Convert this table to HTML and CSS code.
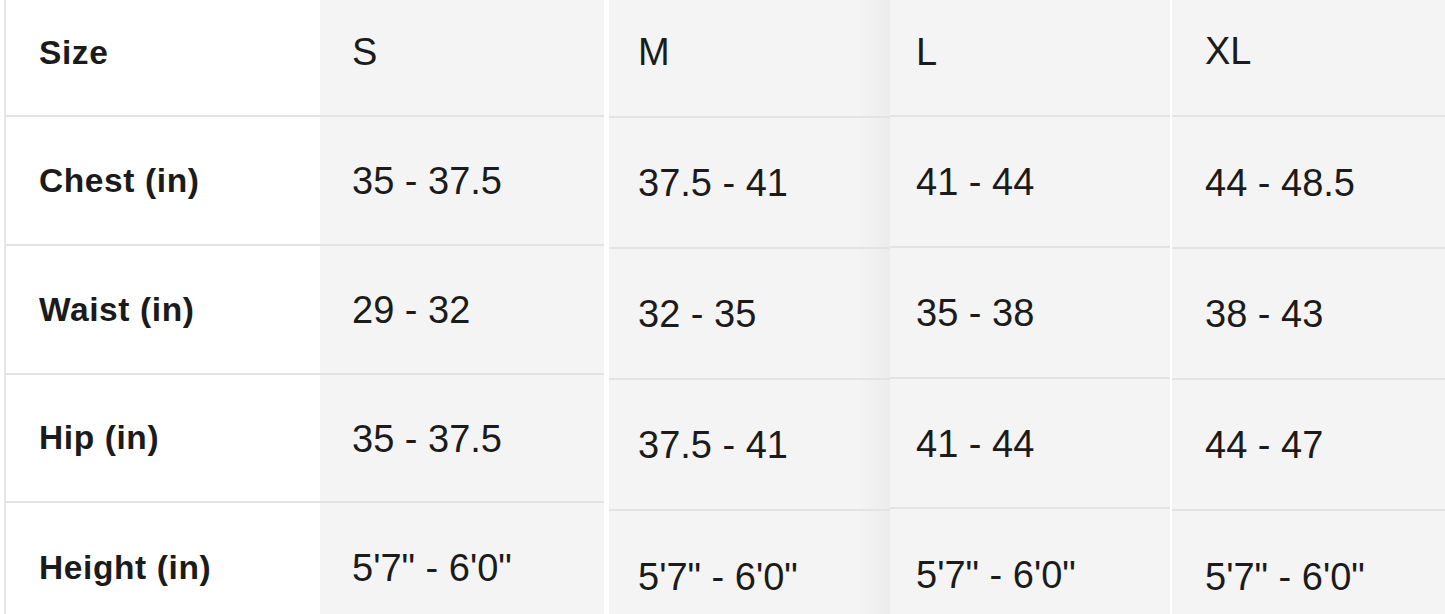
FILE: index.html
```html
<!DOCTYPE html>
<html lang="en">
<head>
<meta charset="utf-8">
<title>Size chart</title>
<link rel="stylesheet" href="styles.css">
</head>
<body>
<div class="chart">
  <div class="col col-label">
    <div class="cell head">Size</div>
    <div class="cell">Chest (in)</div>
    <div class="cell">Waist (in)</div>
    <div class="cell">Hip (in)</div>
    <div class="cell last">Height (in)</div>
  </div>
  <div class="col col-s">
    <div class="cell head">S</div>
    <div class="cell">35 - 37.5</div>
    <div class="cell">29 - 32</div>
    <div class="cell">35 - 37.5</div>
    <div class="cell last">5'7" - 6'0"</div>
  </div>
  <div class="col col-m">
    <div class="cell head">M</div>
    <div class="cell">37.5 - 41</div>
    <div class="cell">32 - 35</div>
    <div class="cell">37.5 - 41</div>
    <div class="cell last">5'7" - 6'0"</div>
  </div>
  <div class="col col-l">
    <div class="cell head">L</div>
    <div class="cell">41 - 44</div>
    <div class="cell">35 - 38</div>
    <div class="cell">41 - 44</div>
    <div class="cell last">5'7" - 6'0"</div>
  </div>
  <div class="col col-xl">
    <div class="cell head">XL</div>
    <div class="cell">44 - 48.5</div>
    <div class="cell">38 - 43</div>
    <div class="cell">44 - 47</div>
    <div class="cell last">5'7" - 6'0"</div>
  </div>
</div>
</body>
</html>
```
FILE: styles.css
```css
html, body {
  margin: 0;
  padding: 0;
  background: #ffffff;
}

.chart {
  display: flex;
  height: 614px;
  overflow: hidden;
  font-family: "Liberation Sans", Arial, sans-serif;
  color: #1b1b1b;
}

.col {
  display: flex;
  flex-direction: column;
  flex: none;
}

.cell {
  box-sizing: border-box;
  display: flex;
  align-items: center;
  flex: none;
  border-bottom: 2px solid #e3e3e3;
  white-space: nowrap;
}

.cell.last {
  border-bottom: none;
}

/* label column */
.col-label {
  width: 314px;
  margin-left: 4px;
  border-left: 2px solid #e6e6e6;
  background: #ffffff;
  font-size: 33.5px;
  font-weight: bold;
  letter-spacing: 0.6px;
}
.col-label .cell {
  padding-left: 33px;
}

/* value columns */
.col-s, .col-m, .col-l, .col-xl {
  background: #f4f4f4;
  font-size: 38px;
}

.col-label .cell, .col-s .cell { height: 129px; }
.col-label .cell.head, .col-s .cell.head { height: 117px; padding-bottom: 10px; }
.col-label .cell:nth-child(4), .col-s .cell:nth-child(4) { height: 128px; }
.col-s .cell { padding-top: 2px; }
.col-s .cell.head { padding-top: 0; }

.col-s {
  width: 284px;
}
.col-s .cell {
  padding-left: 32px;
}

.col-m {
  width: 281px;
  margin-left: 5px;
  background: linear-gradient(to right, #f4f4f4 0, #f4f4f4 250px, #ececec 281px);
}
.col-m .cell {
  height: 131px;
  padding-left: 29px;
  padding-top: 2px;
}
.col-m .cell.head { height: 118px; padding-bottom: 12px; padding-top: 0; }

.col-l {
  width: 280px;
}
.col-l .cell {
  height: 131px;
  padding-left: 26px;
  padding-top: 2px;
}
.col-l .cell.head { height: 117px; padding-bottom: 10px; padding-top: 0; }
.col-l .cell:nth-child(4) { height: 130px; }

.col-xl {
  width: 273px;
  margin-left: 2px;
}
.col-xl .cell {
  height: 131px;
  padding-left: 33px;
  padding-top: 2px;
}
.col-xl .cell.head { height: 117px; padding-bottom: 12px; padding-top: 0; }
.col-xl .cell:nth-child(2) { height: 132px; }
```
